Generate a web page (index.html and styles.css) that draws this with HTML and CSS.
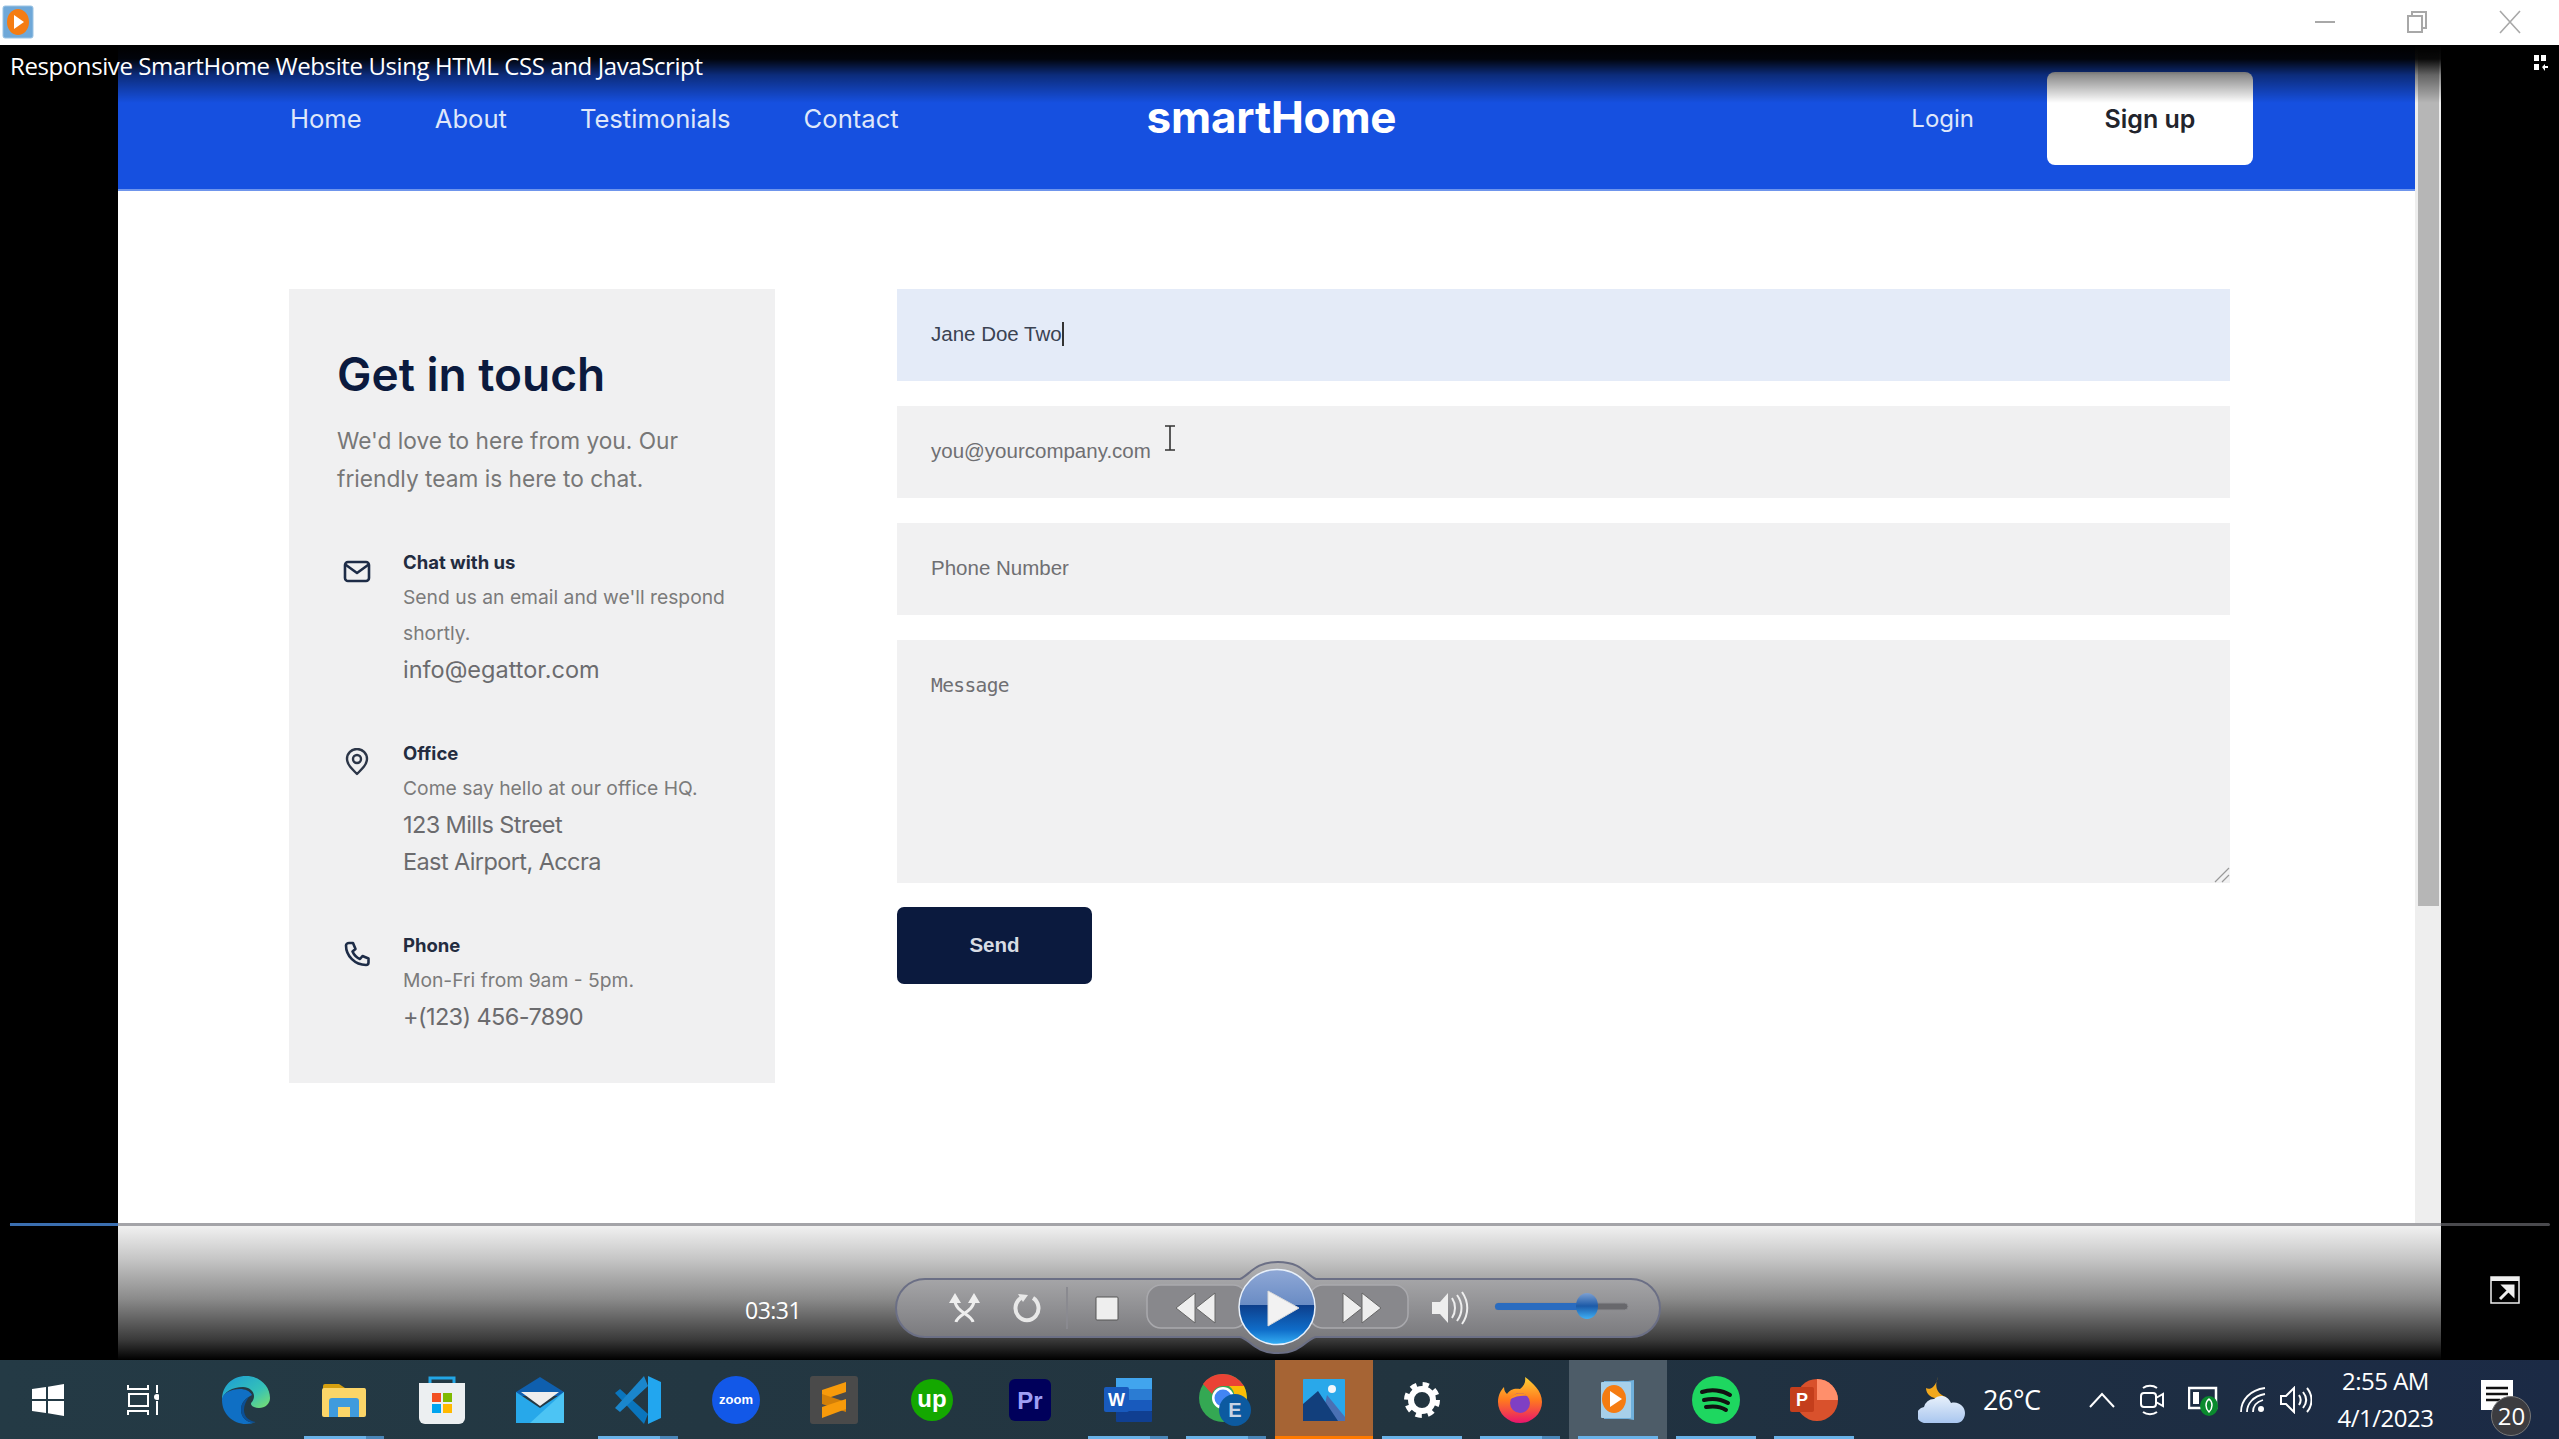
FILE: index.html
```html
<!DOCTYPE html>
<html lang="en">
<head>
  <meta charset="UTF-8" />
  <title>Responsive SmartHome Website Using HTML CSS and JavaScript</title>
  <link rel="stylesheet" href="styles.css">
</head>
<body>

  <div class="titlebar">
    <svg class="app-icon" width="32" height="34" viewBox="0 0 32 34">
      <rect x="1" y="1" width="30" height="32" rx="2" fill="#6fa8d8" stroke="#9cc4e4"/>
      <ellipse cx="16" cy="17" rx="11" ry="13" fill="#f57c12"/>
      <path d="M12 10l10 7-10 7z" fill="#fff"/>
    </svg>
    <div class="window-btns">
      <svg width="24" height="24" viewBox="0 0 24 24"><path d="M2 12h20" stroke="#a8a8a8" stroke-width="2"/></svg>
      <svg width="24" height="24" viewBox="0 0 24 24" fill="none" stroke="#a8a8a8" stroke-width="2"><rect x="4" y="6" width="14" height="16"/><path d="M8 6V2h14v16h-4"/></svg>
      <svg width="24" height="24" viewBox="0 0 24 24"><path d="M2 1l20 22M22 1L2 23" stroke="#a8a8a8" stroke-width="1.6"/></svg>
    </div>
  </div>

  <div class="stage">
    <div class="gutter-left"></div>

    <div class="page">
      <header class="nav">
        <nav class="nav-links">
          <a>Home</a>
          <a>About</a>
          <a>Testimonials</a>
          <a>Contact</a>
        </nav>
        <div class="logo">smartHome</div>
        <div class="nav-actions">
          <a>Login</a>
          <button class="signup">Sign up</button>
        </div>
      </header>

      <section class="contact">
        <aside class="panel">
          <h2>Get in touch</h2>
          <p class="lead">We'd love to here from you. Our friendly team is here to chat.</p>

          <div class="item">
            <svg class="item-icon" width="28" height="28" viewBox="0 0 28 28" fill="none" stroke="#1d2c47" stroke-width="2.6" stroke-linejoin="round" stroke-linecap="round">
              <rect x="2" y="5" width="24" height="19" rx="3"/><path d="M3 8l11 8 11-8"/>
            </svg>
            <div>
              <h3>Chat with us</h3>
              <p class="small">Send us an email and we'll respond shortly.</p>
              <p class="value">info@egattor.com</p>
            </div>
          </div>

          <div class="item">
            <svg class="item-icon" width="28" height="28" viewBox="0 0 28 28" fill="none" stroke="#2c3648" stroke-width="2.4" stroke-linejoin="round">
              <path d="M14 26C8 20 4 16 4 11a10 10 0 0 1 20 0c0 5-4 9-10 15z"/><circle cx="14" cy="11" r="4"/>
            </svg>
            <div>
              <h3>Office</h3>
              <p class="small">Come say hello at our office HQ.</p>
              <p class="value tight">123 Mills Street<br>East Airport, Accra</p>
            </div>
          </div>

          <div class="item">
            <svg class="item-icon" width="28" height="28" viewBox="0 0 28 28" fill="none" stroke="#1d2c47" stroke-width="2.6" stroke-linejoin="round" stroke-linecap="round">
              <path d="M6 3l4 0 2.5 6-3 2.5c1.5 3.5 4 6 7.5 7.5l2.5-3 6 2.5v4c0 1.5-1 2.5-2.5 2.5C12 25 3 16 3 5.5 3 4 4.5 3 6 3z"/>
            </svg>
            <div>
              <h3>Phone</h3>
              <p class="small">Mon-Fri from 9am - 5pm.</p>
              <p class="value tight">+(123) 456-7890</p>
            </div>
          </div>
        </aside>

        <form class="form">
          <div class="field active">Jane Doe Two<span class="caret"></span></div>
          <div class="field placeholder">you@yourcompany.com
            <svg class="ibeam" width="14" height="26" viewBox="0 0 14 26" fill="none" stroke="#333" stroke-width="1.6"><path d="M2 1h10M7 1v24M2 25h10"/></svg>
          </div>
          <div class="field placeholder">Phone Number</div>
          <div class="field textarea placeholder">Message
            <svg class="grip" width="16" height="16" viewBox="0 0 16 16" stroke="#999" stroke-width="1.2"><path d="M1 15L15 1M8 15l7-7"/></svg>
          </div>
          <button class="send" type="button">Send</button>
        </form>
      </section>
    </div>

    <div class="scrollbar"><div class="thumb"></div></div>
    <div class="gutter-right"></div>

    <!-- player overlays -->
    <div class="top-fade"></div>
    <div class="video-title">Responsive SmartHome Website Using HTML CSS and JavaScript</div>
    <svg class="layout-icon" width="16" height="18" viewBox="0 0 16 18" fill="#fff">
      <rect x="1" y="1" width="5" height="6"/><rect x="8" y="1" width="5" height="6"/><rect x="1" y="10" width="5" height="6"/><path d="M9 13l3-3v2h3v2h-3v3z"/>
    </svg>

    <div class="player">
      <span class="time">03:31</span>
      <svg class="transport" width="800" height="105" viewBox="880 1255 800 105">
        <defs>
          <linearGradient id="pillFill" x1="0" y1="0" x2="0" y2="1">
            <stop offset="0" stop-color="#b2b2b4"/><stop offset="1" stop-color="#6e6e72"/>
          </linearGradient>
          <linearGradient id="ballFill" x1="0" y1="0" x2="0" y2="1">
            <stop offset="0" stop-color="#8fa8d6"/><stop offset=".47" stop-color="#6a8cc4"/>
            <stop offset=".48" stop-color="#0d3f8c"/><stop offset=".8" stop-color="#0f6cc8"/><stop offset="1" stop-color="#35b0f5"/>
          </linearGradient>
          <linearGradient id="knobFill" x1="0" y1="0" x2="0" y2="1">
            <stop offset="0" stop-color="#7da0d2"/><stop offset=".5" stop-color="#1c5aa8"/><stop offset="1" stop-color="#3fb0f5"/>
          </linearGradient>
        </defs>
        <path d="M925 1279H1240C1250 1275 1254 1262 1278 1262S1306 1275 1316 1279H1631a29 29 0 0 1 0 58H1316C1306 1339 1302 1353 1278 1353S1250 1339 1240 1337H925a29 29 0 0 1 0-58z" fill="url(#pillFill)" stroke="#6b6f85" stroke-width="2"/>
        <rect x="1147" y="1285" width="100" height="43" rx="14" fill="#88888c" stroke="#a9a9ad" stroke-width="1.5"/>
        <rect x="1309" y="1285" width="99" height="43" rx="14" fill="#88888c" stroke="#a9a9ad" stroke-width="1.5"/>
        <!-- shuffle -->
        <path d="M955 1300c0 12 16 14 18 22M974 1300c0 12-16 14-18 22" fill="none" stroke="#eee" stroke-width="3"/>
        <path d="M949 1303l6-10 6 10zM968 1303l6-10 6 10z" fill="#eee"/>
        <!-- repeat -->
        <path d="M1021 1298a11.5 12 0 1 0 12 0" fill="none" stroke="#e8e8e8" stroke-width="4"/>
        <path d="M1018 1294l10 1-5 7z" fill="#e8e8e8"/>
        <path d="M1067 1287v42" stroke="#8a8a90" stroke-width="2"/>
        <rect x="1096" y="1297" width="22" height="23" rx="1" fill="#eee" stroke="#555"/>
        <path d="M1176 1308l19-15v30zM1196 1308l19-15v30z" fill="#eee" stroke="#666"/>
        <path d="M1343 1293l19 15-19 15zM1362 1293l19 15-19 15z" fill="#eee" stroke="#666"/>
        <!-- volume -->
        <path d="M1432 1302h8l8-9v30l-8-9h-8z" fill="#eee"/>
        <path d="M1452 1298c4 6 4 14 0 20M1457 1295c6 8 6 18 0 26M1462 1292c7 10 7 22 0 32" fill="none" stroke="#eee" stroke-width="2"/>
        <!-- volume slider -->
        <rect x="1495" y="1303" width="133" height="7" rx="3.5" fill="#68686c" stroke="#8a8a8e"/>
        <rect x="1495" y="1303" width="92" height="7" rx="3.5" fill="#2a6cc0"/>
        <ellipse cx="1587" cy="1306" rx="11" ry="13" fill="url(#knobFill)"/>
        <!-- play ball -->
        <ellipse cx="1277" cy="1307" rx="38" ry="37.5" fill="url(#ballFill)" stroke="#e8f0fa" stroke-width="1.5"/>
        <path d="M1268 1291l31 17-31 18z" fill="#f2f2f2" stroke="#d8d8d8"/>
      </svg>
    </div>
    <div class="seek"><div class="seek-done"></div></div>
    <svg class="popout" width="30" height="28" viewBox="0 0 30 28" fill="none">
      <rect x="1" y="1" width="28" height="26" stroke="#eee" stroke-width="1.5"/>
      <rect x="1" y="1" width="28" height="4" fill="#eee"/>
      <path d="M10 23l10-10M14 10h9v9z" stroke="#eee" stroke-width="3" fill="#eee"/>
    </svg>
  </div>

  <footer class="taskbar">
    <div class="slot start">
      <svg width="32" height="32" viewBox="0 0 32 32" fill="#fff"><path d="M0 5l14-2v12H0zM16 2.7L32 0v15H16zM0 17h14v12L0 27zM16 17h16v15l-16-2.7z"/></svg>
    </div>
    <div class="slot taskview">
      <svg width="32" height="32" viewBox="0 0 32 32" fill="none" stroke="#fff" stroke-width="2"><path d="M1 1v4h20V1M2 10h19v12H2zM1 31v-4h20v4M30 1v8M30 17v14"/><circle cx="30" cy="13" r="3" fill="#fff" stroke="none"/></svg>
    </div>
    <div class="slot">
      <svg width="48" height="48" viewBox="0 0 48 48">
        <defs><linearGradient id="edgeTop" x1="0" y1="0" x2="1" y2="1"><stop offset="0" stop-color="#1a9ad6"/><stop offset=".6" stop-color="#35c1b8"/><stop offset="1" stop-color="#7de06c"/></linearGradient></defs>
        <path d="M24 0c14 0 24 10 24 22 0 6-5 10-11 10-4 0-8-2-8-4 0-2 3-3 3-8 0-5-5-9-11-9C10 11 2 16 0 24 0 10 10 0 24 0z" fill="url(#edgeTop)"/>
        <path d="M0 24c0 14 11 24 24 24 4 0 7-1 10-2-8 2-15-4-15-12 0-8 5-12 11-15-2-4-7-6-12-6C9 13 0 17 0 24z" fill="#0f6fc4"/>
        <path d="M19 34c0 8 7 14 15 12-8-1-12-6-12-12 0-5 2-9 5-13-5 3-8 7-8 13z" fill="#0a4f96"/>
      </svg>
    </div>
    <div class="slot files">
      <svg width="44" height="34" viewBox="0 0 44 34">
        <path d="M1 3a2 2 0 0 1 2-2h14l6 4h19a1 1 0 0 1 1 1v4H1z" fill="#d69f0e"/>
        <rect x="0" y="5" width="44" height="29" rx="2" fill="#fbd568"/>
        <path d="M7 34V18a3 3 0 0 1 3-3h24a3 3 0 0 1 3 3v16h-9V24H16v10z" fill="#3f9bdd"/>
      </svg>
      <i class="run split"></i>
    </div>
    <div class="slot">
      <svg width="46" height="48" viewBox="0 0 46 48">
        <path d="M11 9V2h24v7" fill="none" stroke="#22a6e6" stroke-width="3"/>
        <path d="M0 7h46v35a6 6 0 0 1-6 6H6a6 6 0 0 1-6-6z" fill="#eceff1"/>
        <rect x="13" y="17" width="9" height="9" fill="#f25022"/><rect x="24" y="17" width="9" height="9" fill="#7fba00"/>
        <rect x="13" y="28" width="9" height="9" fill="#00a4ef"/><rect x="24" y="28" width="9" height="9" fill="#ffb900"/>
      </svg>
    </div>
    <div class="slot">
      <svg width="48" height="46" viewBox="0 0 48 46">
        <path d="M0 15L24 0l24 15v4H0z" fill="#0f5fae"/>
        <path d="M5 15h38L24 29z" fill="#eee"/>
        <path d="M0 15l24 16 24-16v31H0z" fill="#27a8ea"/>
        <path d="M48 15v31H14z" fill="#4cc4f4"/>
      </svg>
    </div>
    <div class="slot">
      <svg width="48" height="48" viewBox="0 0 48 48">
        <path d="M1 17l5-4 28 25-4 10z" fill="#0a75bd"/>
        <path d="M1 32l5 4L34 10 30 0z" fill="#1a86cc"/>
        <path d="M34 0l13 6v36l-13 6z" fill="#22a6ef"/>
      </svg>
      <i class="run split"></i>
    </div>
    <div class="slot">
      <svg width="48" height="48" viewBox="0 0 48 48">
        <circle cx="24" cy="24" r="24" fill="#1258e8"/>
        <text x="24" y="28" text-anchor="middle" class="ico-text" font-size="13" fill="#fff">zoom</text>
      </svg>
    </div>
    <div class="slot">
      <svg width="48" height="48" viewBox="0 0 48 48">
        <rect width="48" height="48" rx="3" fill="#4a4a4a"/>
        <path d="M36 6v10L12 24V14z" fill="#f79a0a"/>
        <path d="M12 18l24 8v10L12 28z" fill="#d27f08"/>
        <path d="M36 23v10L12 42V31z" fill="#f79a0a"/>
      </svg>
    </div>
    <div class="slot">
      <svg width="42" height="42" viewBox="0 0 42 42">
        <circle cx="21" cy="21" r="21" fill="#14a800"/>
        <text x="21" y="28" text-anchor="middle" class="ico-text" font-size="24" fill="#fff">up</text>
      </svg>
    </div>
    <div class="slot">
      <svg width="42" height="42" viewBox="0 0 42 42">
        <rect width="42" height="42" rx="6" fill="#00005b"/>
        <text x="21" y="30" text-anchor="middle" class="ico-text" font-size="24" fill="#9f9ff5">Pr</text>
      </svg>
    </div>
    <div class="slot">
      <svg width="48" height="44" viewBox="0 0 48 44">
        <rect x="12" y="0" width="36" height="11" fill="#41a5ee"/><rect x="12" y="11" width="36" height="11" fill="#2b7cd3"/>
        <rect x="12" y="22" width="36" height="11" fill="#185abd"/><rect x="12" y="33" width="36" height="11" rx="1" fill="#103f91"/>
        <rect x="0" y="9" width="25" height="25" rx="2" fill="#185abd"/>
        <text x="12.5" y="28" text-anchor="middle" class="ico-text" font-size="18" fill="#fff">W</text>
      </svg>
      <i class="run split"></i>
    </div>
    <div class="slot">
      <svg width="54" height="52" viewBox="0 0 54 52">
        <circle cx="24" cy="24" r="24" fill="#34a853"/>
        <path d="M24 0a24 24 0 0 1 21 12H24a12 12 0 0 0-11 8L4 10A24 24 0 0 1 24 0z" fill="#ea4335"/>
        <path d="M45 12a24 24 0 0 1-6 30L30 32a12 12 0 0 0 0-20z" fill="#fbbc05"/>
        <circle cx="24" cy="24" r="11" fill="#fff"/><circle cx="24" cy="24" r="8.5" fill="#4285f4"/>
        <circle cx="36" cy="36" r="16" fill="#0c5aa0"/>
        <text x="36" y="43" text-anchor="middle" class="ico-text" font-size="20" fill="#c8d4e4">E</text>
      </svg>
      <i class="run split"></i>
    </div>
    <div class="slot photos">
      <svg width="42" height="42" viewBox="0 0 42 42">
        <rect width="42" height="42" rx="1" fill="#29a8ea"/>
        <circle cx="29" cy="10" r="4" fill="#f2f6fa"/>
        <path d="M24 16l18 22v4H18z" fill="#4a70b4"/>
        <path d="M15 12l20 30H0V25z" fill="#123f7c"/>
      </svg>
      <i class="run orange"></i>
    </div>
    <div class="slot">
      <svg width="36" height="36" viewBox="0 0 36 36" fill="none" stroke="#fff">
        <circle cx="18" cy="18" r="11" stroke-width="6"/>
        <circle cx="18" cy="18" r="15.5" stroke-width="5" stroke-dasharray="6.2 6"/>
      </svg>
      <i class="run"></i>
    </div>
    <div class="slot">
      <svg width="44" height="46" viewBox="0 0 44 46">
        <defs><linearGradient id="foxFill" x1="0" y1="0" x2="0" y2="1"><stop offset="0" stop-color="#ffd234"/><stop offset=".5" stop-color="#ff7a1e"/><stop offset="1" stop-color="#e8146e"/></linearGradient></defs>
        <path d="M27 0c8 6 17 14 17 25a22 21 0 0 1-44 0C0 18 3 13 6 10c0 4 2 6 3 7 3-5 8-6 13-5 4-3 6-7 5-12z" fill="url(#foxFill)"/>
        <circle cx="22" cy="26" r="10" fill="#7f3fc4"/>
        <path d="M12 22c3-6 12-8 18-3-6-1-12 0-18 3z" fill="#ff9320"/>
      </svg>
      <i class="run split"></i>
    </div>
    <div class="slot wmp">
      <svg width="36" height="44" viewBox="0 0 36 44">
        <path d="M4 3h24l6 -1v40l-6-1H4z" fill="#6fb0dc"/>
        <rect x="1" y="4" width="30" height="36" rx="1" fill="#a7d0ea"/>
        <ellipse cx="14" cy="21" rx="12" ry="14" fill="#f57c12"/>
        <path d="M10 13l12 8-12 8z" fill="#fff"/>
      </svg>
      <i class="run"></i>
    </div>
    <div class="slot">
      <svg width="48" height="48" viewBox="0 0 48 48">
        <circle cx="24" cy="24" r="24" fill="#1ed760"/>
        <path d="M10 16c9-3 20-2 28 3M12 24c8-2 17-1 24 3M14 31c6-1 14-1 20 3" fill="none" stroke="#111" stroke-width="4" stroke-linecap="round"/>
      </svg>
      <i class="run"></i>
    </div>
    <div class="slot">
      <svg width="48" height="46" viewBox="0 0 48 46">
        <circle cx="27" cy="23" r="21" fill="#d9512c"/>
        <path d="M27 2a21 21 0 0 1 21 21H27z" fill="#ff8f6b"/>
        <rect x="0" y="10" width="24" height="25" rx="2" fill="#c43e1c"/>
        <text x="12" y="29" text-anchor="middle" class="ico-text" font-size="18" fill="#fff">P</text>
      </svg>
      <i class="run"></i>
    </div>

    <div class="tray">
      <div class="weather">
        <svg width="48" height="46" viewBox="0 0 48 46">
          <defs><linearGradient id="cloud" x1="0" y1="0" x2="0" y2="1"><stop offset="0" stop-color="#e8f1fb"/><stop offset="1" stop-color="#a9c6ef"/></linearGradient></defs>
          <path d="M20 0c-3 7-3 16 8 20-9 4-20 0-20-9 3 2 9 1 12-11z" fill="#f2a81d"/>
          <path d="M8 46a8 8 0 0 1-2-16 10 10 0 0 1 10-8c5-5 14-4 17 4 8-2 14 4 14 10 0 6-4 10-8 10z" fill="url(#cloud)"/>
        </svg>
        <span>26°C</span>
      </div>
      <svg class="chevron" width="26" height="16" viewBox="0 0 26 16" fill="none" stroke="#fff" stroke-width="2"><path d="M1 15L13 2l12 13"/></svg>
      <svg class="meet" width="24" height="32" viewBox="0 0 24 32" fill="none" stroke="#fff" stroke-width="2"><path d="M3 4c4-3 10-3 14 0M3 28c4 3 10 3 14 0"/><rect x="1" y="9" width="15" height="14" rx="3"/><path d="M16 14l7-4v12l-7-4z"/></svg>
      <svg class="battery" width="30" height="32" viewBox="0 0 30 32">
        <rect x="1" y="4" width="27" height="20" fill="none" stroke="#fff" stroke-width="2.5"/><rect x="5" y="8" width="6" height="12" fill="#fff"/>
        <ellipse cx="21" cy="22" rx="9" ry="10" fill="#0a8a2e"/><path d="M21 15c4 3 4 9 0 13-4-4-4-10 0-13z" fill="none" stroke="#fff" stroke-width="1.5"/>
      </svg>
      <svg class="wifi" width="26" height="26" viewBox="0 0 26 26" fill="none" stroke="#fff" stroke-width="1.8"><path d="M1 25C1 13 10 3 25 1M7 25C7 17 13 9 25 7M13 25c0-5 3-10 10-12"/><circle cx="21" cy="22" r="3" fill="#fff" stroke="none"/></svg>
      <svg class="sound" width="32" height="28" viewBox="0 0 32 28" fill="none" stroke="#fff" stroke-width="2"><path d="M1 10h5l8-8v24l-8-8H1zM19 9c2 3 2 7 0 10M23 6c4 5 4 11 0 16M27 2c6 7 6 17 0 24"/></svg>
      <div class="clock"><span>2:55 AM</span><span>4/1/2023</span></div>
      <div class="notify">
        <svg width="32" height="38" viewBox="0 0 32 38"><path d="M0 0h32v30H0z" fill="#fff"/><path d="M5 8h22M5 14h22M5 20h14" stroke="#111" stroke-width="2.5"/></svg>
        <span class="badge">20</span>
      </div>
    </div>
  </footer>

</body>
</html>
```

FILE: styles.css
```css
* {
  box-sizing: border-box;
}

html, body {
  margin: 0;
  height: 100%;
  overflow: hidden;
}

body {
  display: flex;
  flex-direction: column;
  background: #000;
  font-family: "Inter", "Liberation Sans", sans-serif;
}

/* window chrome */
.titlebar {
  height: 45px;
  flex: none;
  background: #fff;
  display: flex;
  align-items: center;
  justify-content: space-between;
  padding: 0 37px 2px 2px;
}

.window-btns {
  display: flex;
  gap: 67px;
}

.window-btns svg:last-child {
  margin-left: 3px;
}

/* video area */
.stage {
  position: relative;
  flex: 1;
  display: flex;
  min-height: 0;
}

.gutter-left {
  width: 118px;
  flex: none;
  background: #000;
}

.gutter-right {
  flex: 1;
  background: #000;
}

.page {
  width: 2297px;
  flex: none;
  background: #fff;
}

.scrollbar {
  width: 26px;
  flex: none;
  background: #eeeeee;
  padding: 0 2px 0 3px;
}

.thumb {
  height: 861px;
  background: #b6b6b6;
}

/* recorded page */
.nav {
  height: 146px;
  padding: 27px 162px 26px 172px;
  display: grid;
  grid-template-columns: 1fr auto 1fr;
  align-items: center;
  background: #1650e0;
  border-bottom: 2px solid #6f95ec;
  color: #dfe7fa;
  font-size: 25.6px;
}

.nav-links {
  display: flex;
  gap: 73px;
}

.logo {
  color: #fff;
  font-size: 44px;
  font-weight: 700;
  letter-spacing: -.2px;
  margin-top: -3px;
}

.nav-actions {
  display: flex;
  justify-content: flex-end;
  align-items: center;
  gap: 73px;
  font-size: 24px;
}

.signup {
  width: 206px;
  height: 93px;
  border: none;
  border-radius: 8px;
  background: #fff;
  color: #22242c;
  font: 600 25px "Inter", "Liberation Sans", sans-serif;
}

.contact {
  display: flex;
  gap: 122px;
  padding: 98px 0 0 171px;
}

.panel {
  width: 486px;
  height: 794px;
  padding: 52px 20px 0 48px;
  background: #f0f0f1;
}

.panel h2 {
  margin: 0 0 15px;
  font-size: 46px;
  line-height: 66px;
  font-weight: 600;
  color: #0b1a3e;
}

.lead {
  margin: 0 0 49px;
  font-size: 22.7px;
  line-height: 38px;
  color: #777;
}

.item {
  display: flex;
  margin-bottom: 50px;
}

.item-icon {
  flex: none;
  margin: 10px 32px 0 6px;
}

.item h3 {
  margin: 0 0 2px;
  font-size: 18.5px;
  line-height: 30px;
  font-weight: 700;
  color: #232c40;
}

.small {
  margin: 0;
  font-size: 19.3px;
  line-height: 36px;
  color: #7b7b7b;
}

.value {
  margin: 0;
  font-size: 23.5px;
  line-height: 37px;
  color: #6b6b6e;
}

.value.tight {
  letter-spacing: -.6px;
}

.form {
  width: 1333px;
  display: flex;
  flex-direction: column;
  align-items: flex-start;
  gap: 25px;
}

.field {
  position: relative;
  width: 100%;
  height: 92px;
  padding: 0 0 2px 34px;
  background: #f1f1f2;
  display: flex;
  align-items: center;
  font: 20.5px "Liberation Sans", Arial, sans-serif;
  color: #3a4252;
}

.field.active {
  background: #e4ebf8;
}

.field.placeholder {
  color: #6f6f72;
}

.caret {
  width: 2px;
  height: 24px;
  background: #333;
}

.ibeam {
  position: absolute;
  left: 266px;
  top: 19px;
}

.textarea {
  height: 243px;
  align-items: flex-start;
  padding-top: 34px;
  font: 19.5px "DejaVu Sans Mono", "Liberation Mono", monospace;
  letter-spacing: -.6px;
}

.grip {
  position: absolute;
  right: 0;
  bottom: 0;
}

.send {
  width: 195px;
  height: 77px;
  margin-top: -1px;
  padding-bottom: 3px;
  border: none;
  border-radius: 7px;
  background: #0b1a3e;
  color: #d8dce4;
  font: 700 20.5px "Liberation Sans", Arial, sans-serif;
}

/* player overlays */
.top-fade {
  position: absolute;
  left: 0;
  right: 0;
  top: 0;
  height: 58px;
  background: linear-gradient(to bottom, #000 0, rgba(0, 0, 0, .95) 14px, rgba(0, 0, 0, .45) 30px, rgba(0, 0, 0, 0) 58px);
}

.video-title {
  position: absolute;
  left: 10px;
  top: 4px;
  color: #fff;
  font: 24px "Open Sans", "Liberation Sans", sans-serif;
  letter-spacing: -.4px;
}

.layout-icon {
  position: absolute;
  right: 10px;
  top: 9px;
}

.player {
  position: absolute;
  left: 118px;
  width: 2323px;
  bottom: 0;
  height: 135px;
  padding: 30px 0 0 627px;
  display: flex;
  background: linear-gradient(to bottom, #f2f2f2 0, #c6c6c6 25%, #8a8a8a 55%, #3a3a3a 85%, #000 100%);
}

.time {
  height: 105px;
  display: flex;
  align-items: center;
  margin: 2px 80px 0 0;
  width: 55px;
  color: #fff;
  font: 23px "Open Sans", "Liberation Sans", sans-serif;
  letter-spacing: -.5px;
}

.transport {
  flex: none;
}

.seek {
  position: absolute;
  left: 10px;
  right: 9px;
  top: 1178px;
  height: 3px;
  border-radius: 2px;
  background: linear-gradient(to right, #a4a4a8 0, #a4a4a8 2431px, #4a4a4e 2431px);
}

.seek-done {
  width: 108px;
  height: 100%;
  background: #3b6fb0;
}

.popout {
  position: absolute;
  left: 2490px;
  top: 1231px;
}

/* windows taskbar */
.taskbar {
  height: 79px;
  flex: none;
  display: flex;
  background: linear-gradient(to right, #243a45 0, #22343f 55%, #1b2a45 100%);
  color: #fff;
}

.slot {
  position: relative;
  width: 98px;
  flex: none;
  display: flex;
  align-items: center;
  justify-content: center;
}

.start {
  width: 96px;
}

.taskview {
  width: 101px;
}

.taskview svg {
  margin-right: 8px;
}

.photos {
  background: #a66434;
}

.wmp {
  background: #4d5c68;
}

.ico-text {
  font-family: "Liberation Sans", sans-serif;
  font-weight: 700;
}

/* running app marker */
.run {
  position: absolute;
  left: 9px;
  right: 9px;
  bottom: 0;
  height: 3px;
  background: #6ab2e8;
}

.run.split {
  background: linear-gradient(to right, #6ab2e8 78%, #4a86b8 78%);
}

.run.orange {
  left: 0;
  right: 0;
  background: #ff7a00;
}

.tray {
  flex: 1;
  display: flex;
  align-items: center;
  padding-left: 55px;
}

.weather {
  display: flex;
  align-items: center;
  gap: 17px;
  font: 27px "Open Sans", "Liberation Sans", sans-serif;
  letter-spacing: -.5px;
  margin-right: 49px;
}

.chevron {
  margin-right: 25px;
}

.meet {
  margin-right: 24px;
}

.battery {
  margin-right: 22px;
}

.wifi {
  margin-right: 14px;
}

.sound {
  margin-right: 20px;
}

.clock {
  display: flex;
  flex-direction: column;
  align-items: center;
  gap: 7px;
  width: 106px;
  font: 24px/30px "Open Sans", "Liberation Sans", sans-serif;
  letter-spacing: -.5px;
}

.notify {
  position: relative;
  margin-left: 43px;
  margin-top: 2px;
}

.badge {
  position: absolute;
  left: 10px;
  top: 16px;
  width: 40px;
  height: 40px;
  border-radius: 50%;
  background: #3c3c40;
  border: 1px solid #777;
  display: flex;
  align-items: center;
  justify-content: center;
  font: 24px "Open Sans", "Liberation Sans", sans-serif;
}
```
